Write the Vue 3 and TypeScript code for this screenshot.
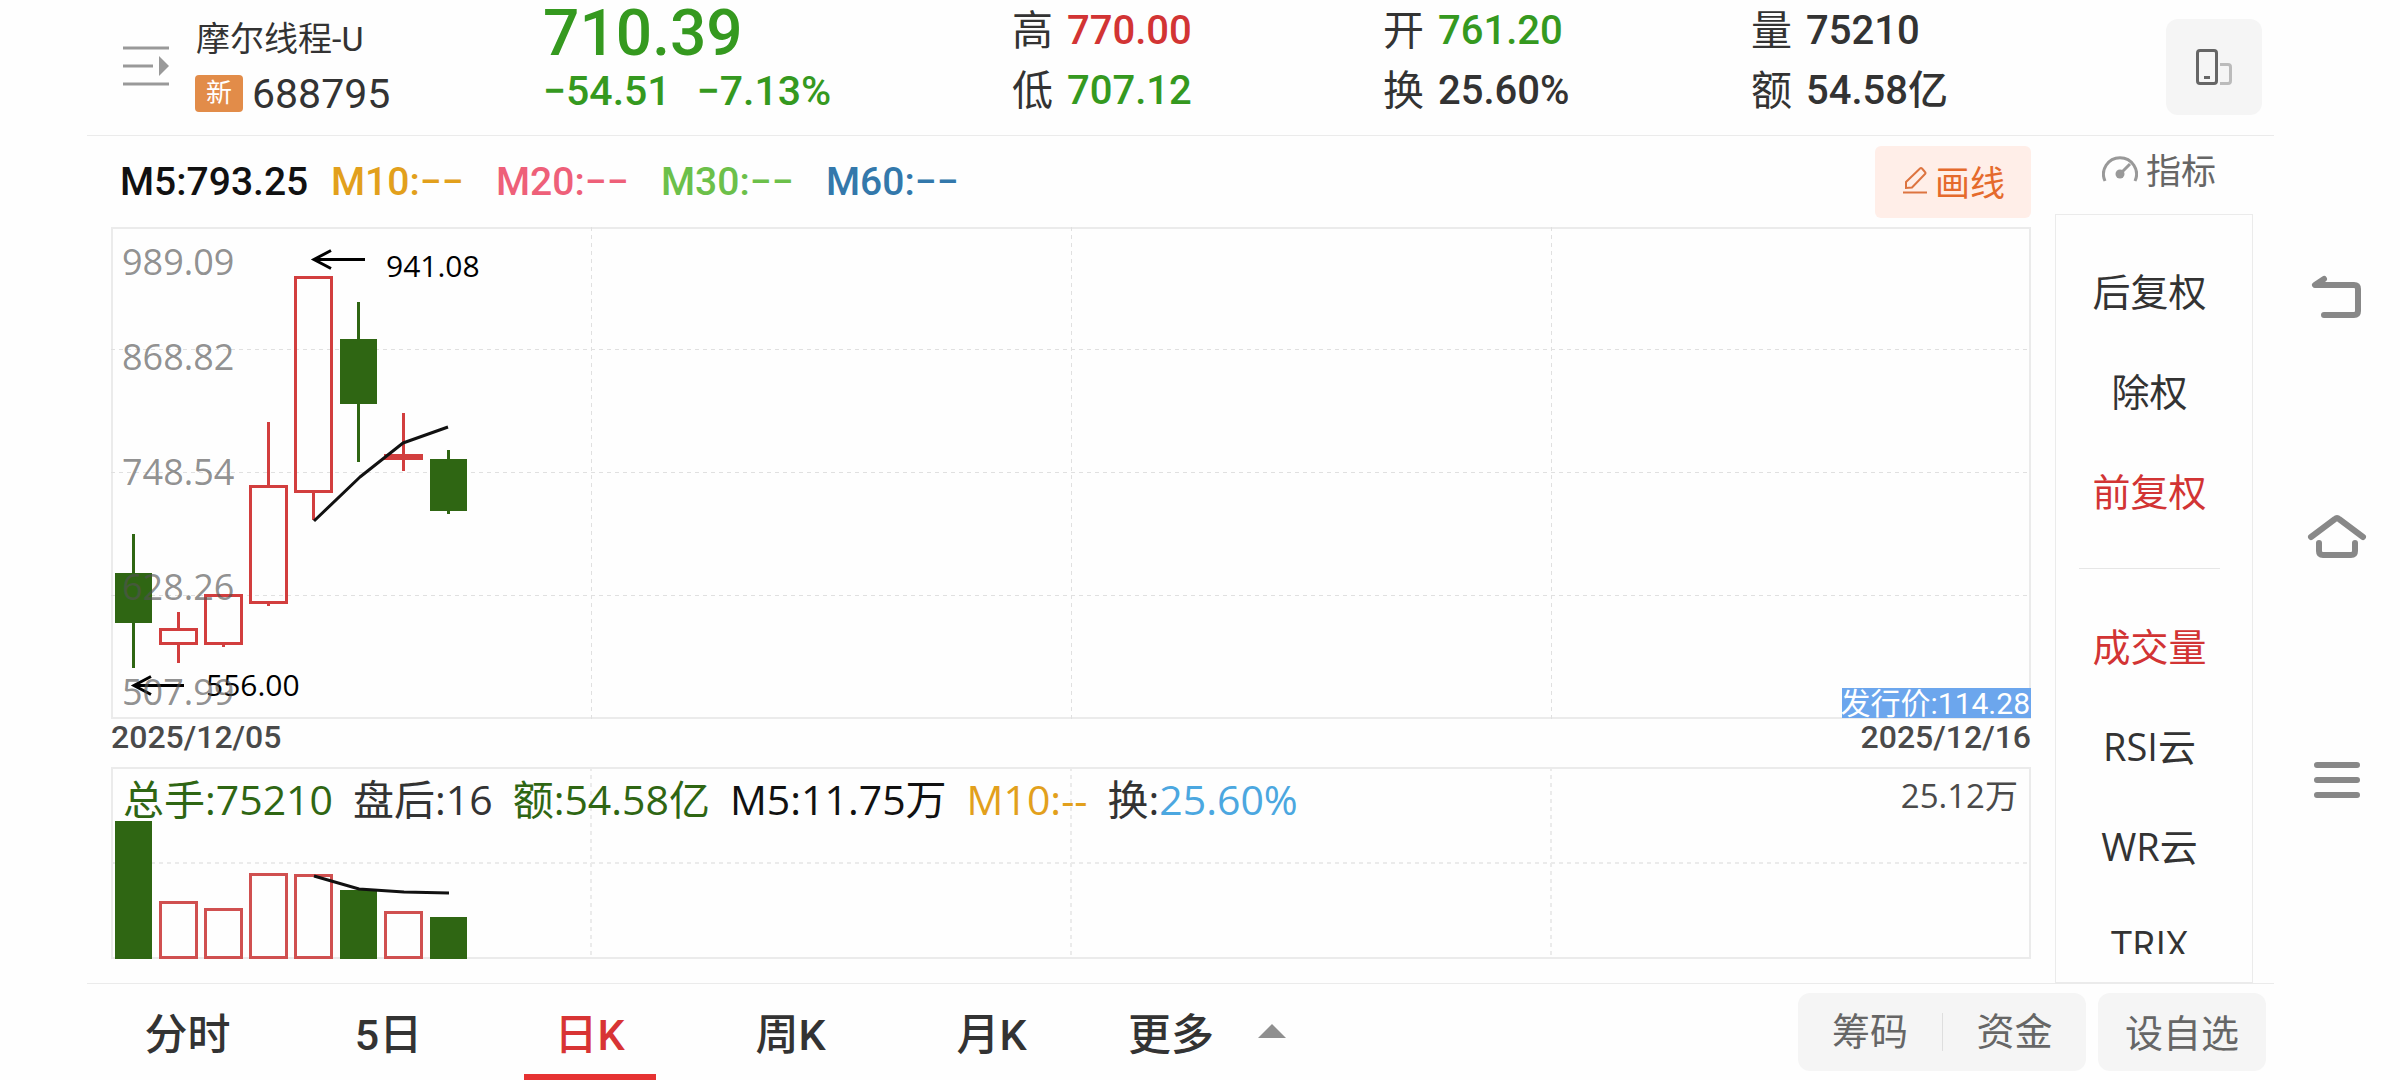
<script setup lang="ts">
import { ref } from 'vue'

interface Candle {
  up: boolean
  high: number
  top: number
  bottom: number
  low: number
  volume: number
}

interface Quote {
  label: string
  value: string
  tone: string
}

const quotes: Quote[][] = [
  [
    { label: '高', value: '770.00', tone: 'rise' },
    { label: '低', value: '707.12', tone: 'fall' },
  ],
  [
    { label: '开', value: '761.20', tone: 'fall' },
    { label: '换', value: '25.60%', tone: 'plain' },
  ],
  [
    { label: '量', value: '75210', tone: 'plain' },
    { label: '额', value: '54.58亿', tone: 'plain' },
  ],
]

const averages = [
  { text: 'M10:−−', color: '#e2a01c' },
  { text: 'M20:−−', color: '#ee6079' },
  { text: 'M30:−−', color: '#6cc04a' },
  { text: 'M60:−−', color: '#3378ab' },
]

/* Vertical values are in chart units, measured from the top of each plot. */
const candles: Candle[] = [
  { up: false, high: 307, top: 346, bottom: 396, low: 441, volume: 138 },
  { up: true, high: 385, top: 401, bottom: 418, low: 436, volume: 58 },
  { up: true, high: 367, top: 367, bottom: 418, low: 420, volume: 51 },
  { up: true, high: 195, top: 258, bottom: 377, low: 379, volume: 86 },
  { up: true, high: 49, top: 49, bottom: 266, low: 293, volume: 85 },
  { up: false, high: 75, top: 112, bottom: 177, low: 235, volume: 69 },
  { up: true, high: 186, top: 227, bottom: 233, low: 244, volume: 48 },
  { up: false, high: 223, top: 232, bottom: 284, low: 287, volume: 42 },
]

const STEP = 45
const left = (i: number): number => 4 + i * STEP
const VOLUME_BASE = 192

const priceLabels = [
  { text: '989.09', y: 48 },
  { text: '868.82', y: 143 },
  { text: '748.54', y: 258 },
  { text: '628.26', y: 373 },
  { text: '507.99', y: 478 },
]

const gridColumns = [480, 960, 1440]

const adjustments = ['后复权', '除权', '前复权']
const indicators = ['成交量', 'RSI云', 'WR云', 'TRIX']
const adjustment = ref('前复权')
const indicator = ref('成交量')

const periods = ['分时', '5日', '日K', '周K', '月K']
const period = ref('日K')
</script>

<template>
  <div class="screen">
    <div class="app">
      <header class="header">
        <div class="stock">
          <button class="bare" aria-label="列表">
            <svg width="46" height="40" viewBox="0 0 46 40">
              <path d="M0 2H46M0 20H30M0 38H46" stroke="#999" stroke-width="3" />
              <path d="M36 10L46 20L36 30Z" fill="#999" />
            </svg>
          </button>
          <div class="identity">
            <h1 class="name">摩尔线程-U</h1>
            <div class="code-row">
              <span class="badge">新</span>
              <span class="code">688795</span>
            </div>
          </div>
        </div>

        <div class="price fall">
          <div class="last">710.39</div>
          <div class="change"><span>−54.51</span><span>−7.13%</span></div>
        </div>

        <dl v-for="(column, i) in quotes" :key="i" class="quotes">
          <div v-for="q in column" :key="q.label" class="quote">
            <dt>{{ q.label }}</dt>
            <dd :class="q.tone">{{ q.value }}</dd>
          </div>
        </dl>

        <button class="rotate" aria-label="竖屏">
          <svg width="36" height="36" viewBox="0 0 36 36" fill="none" stroke-width="3">
            <rect x="1.500" y="1.500" width="19" height="33" rx="2.500" stroke="#666" />
            <path d="M8 28.500H14" stroke="#666" />
            <path d="M24 15.500H32Q34.500 15.500 34.500 18V32Q34.500 34.500 32 34.500H24" stroke="#bbb" />
          </svg>
        </button>
      </header>

      <main class="body">
        <section class="charts">
          <div class="averages">
            <span class="average first">M5:793.25</span>
            <span v-for="a in averages" :key="a.text" class="average" :style="{ color: a.color }">{{ a.text }}</span>
            <button class="draw">
              <svg width="24" height="28" viewBox="0 0 24 28" fill="none" stroke="#dd7440" stroke-width="2">
                <path d="M0 26.500H24" />
                <path d="M3 22V16L17 2.500Q18 1.500 19 2.500L22 6Q23 7 22 8L9 21.500Z" />
              </svg>
              <span>画线</span>
            </button>
          </div>

          <svg class="plot" viewBox="0 0 1920 492">
            <rect x="1" y="1" width="1918" height="490" fill="none" stroke="#ebebeb" stroke-width="2" />
            <g stroke="#e0e0e0" stroke-dasharray="4 4">
              <path v-for="y in [122, 245, 368]" :key="y" :d="`M0 ${y}.5H1920`" />
              <path v-for="x in gridColumns" :key="x" :d="`M${x}.5 0V492`" />
            </g>

            <g v-for="(c, i) in candles" :key="i">
              <template v-if="c.up">
                <path
                  :d="`M${left(i) + 18.5} ${c.high}V${c.top}M${left(i) + 18.5} ${c.bottom}V${c.low}`"
                  stroke="#d23e3e"
                  stroke-width="3"
                />
                <rect
                  :x="left(i) + 0.5"
                  :y="c.top + 1.5"
                  width="36"
                  :height="c.bottom - c.top - 3"
                  fill="none"
                  stroke="#d23e3e"
                  stroke-width="3"
                />
              </template>
              <template v-else>
                <rect :x="left(i) + 17" :y="c.high" width="3" :height="c.low - c.high" fill="#2f6613" />
                <rect :x="left(i)" :y="c.top" width="37" :height="c.bottom - c.top" fill="#2f6613" />
              </template>
            </g>

            <path d="M203 294L249 250L292 216L337 200" fill="none" stroke="#111" stroke-width="3" stroke-linejoin="round" />

            <g fill="none" stroke="#000" stroke-width="3">
              <path d="M254 32.500H203M220 23.500L203 32.500L220 41.500" />
              <path d="M73 458.500H23M40 449.500L23 458.500L40 467.500" />
            </g>
            <text class="mark" x="275" y="50">941.08</text>
            <text class="mark" x="95" y="469">556.00</text>
            <text v-for="p in priceLabels" :key="p.text" class="scale" x="11" :y="p.y">{{ p.text }}</text>

            <rect x="1731" y="461" width="189" height="30" fill="#6ca6ed" />
            <text class="issue" x="1919" y="487" text-anchor="end">发行价:114.28</text>
          </svg>

          <div class="dates"><time>2025/12/05</time><time>2025/12/16</time></div>

          <div class="volume">
            <svg class="plot" viewBox="0 0 1920 192">
              <rect x="1" y="1" width="1918" height="190" fill="none" stroke="#ebebeb" stroke-width="2" />
              <g stroke="#ebebeb" stroke-width="2" stroke-dasharray="4 4">
                <path d="M0 96H1920" />
                <path v-for="x in gridColumns" :key="x" :d="`M${x} 0V192`" />
              </g>
              <template v-for="(c, i) in candles" :key="i">
                <rect
                  v-if="c.up"
                  :x="left(i) + 0.5"
                  :y="VOLUME_BASE - c.volume + 1.5"
                  width="36"
                  :height="c.volume - 3"
                  fill="#fefefe"
                  stroke="#d05050"
                  stroke-width="3"
                />
                <rect v-else :x="left(i)" :y="VOLUME_BASE - c.volume" width="37" :height="c.volume" fill="#2f6613" />
              </template>
              <path d="M203 109L248 122L293 125L338 126" fill="none" stroke="#111" stroke-width="3" />
            </svg>
            <div class="legend">
              <span class="deep">总手:75210</span>
              <span>盘后:16</span>
              <span class="deep">额:54.58亿</span>
              <span class="ink">M5:11.75万</span>
              <span class="amber">M10:--</span>
              <span>换:<span class="sky">25.60%</span></span>
              <span class="peak">25.12万</span>
            </div>
          </div>
        </section>

        <aside class="side">
          <button class="bare side-head">
            <svg width="36" height="28" viewBox="0 0 36 28" fill="none" stroke="#999" stroke-width="3">
              <path d="M3 27A16.500 16.500 0 1 1 33 27" />
              <path d="M18 20L28 10" />
              <circle cx="18" cy="20" r="4.500" fill="#999" stroke="none" />
            </svg>
            <span>指标</span>
          </button>
          <div class="panel">
            <div class="options">
              <button
                v-for="a in adjustments"
                :key="a"
                class="bare option"
                :class="{ active: a === adjustment }"
                @click="adjustment = a"
              >{{ a }}</button>
              <hr class="split" />
              <button
                v-for="n in indicators"
                :key="n"
                class="bare option"
                :class="{ active: n === indicator }"
                @click="indicator = n"
              >{{ n }}</button>
            </div>
          </div>
        </aside>
      </main>

      <footer class="footer">
        <nav class="tabs">
          <button
            v-for="p in periods"
            :key="p"
            class="bare tab"
            :class="{ current: p === period }"
            @click="period = p"
          >{{ p }}</button>
          <button class="bare tab more">
            <span>更多</span>
            <svg width="28" height="14" viewBox="0 0 28 14"><path d="M14 0L28 14H0Z" fill="#8f8f8f" /></svg>
          </button>
        </nav>
        <div class="actions">
          <div class="pair">
            <button class="bare">筹码</button>
            <button class="bare">资金</button>
          </div>
          <button class="bare watch">设自选</button>
        </div>
      </footer>
    </div>

    <nav class="system">
      <button class="bare" aria-label="返回">
        <svg width="60" height="60" viewBox="0 0 60 60" fill="none" stroke="#888" stroke-width="6" stroke-linecap="round" stroke-linejoin="round">
          <path d="M17 11L8 17H47Q51 17 51 21V43Q51 47 47 47H17" />
        </svg>
      </button>
      <button class="bare" aria-label="主页">
        <svg width="60" height="60" viewBox="0 0 60 60" fill="none" stroke="#888" stroke-width="6" stroke-linecap="round" stroke-linejoin="round">
          <path d="M4 27L28 9Q30 7 32 9L56 27" />
          <path d="M12 33V41Q12 45 16 45H44Q48 45 48 41V33" />
        </svg>
      </button>
      <button class="bare" aria-label="最近任务">
        <svg width="60" height="60" viewBox="0 0 60 60" fill="none" stroke="#888" stroke-width="6" stroke-linecap="round">
          <path d="M10 13H50M10 28H50M10 43H50" />
        </svg>
      </button>
    </nav>
  </div>
</template>

<style>
body {
  margin: 0;
  background: #fefefe;
}
</style>

<style scoped>
.screen {
  display: grid;
  grid-template-columns: minmax(0, 1fr) 126px;
  min-height: 100vh;
  padding-left: 87px;
  box-sizing: border-box;
  color: #333;
  font-family: Roboto, 'Noto Sans CJK SC', sans-serif;
}

button {
  font: inherit;
  color: inherit;
  cursor: pointer;
}

svg {
  display: block;
}

.bare {
  padding: 0;
  border: 0;
  background: none;
}

.app {
  display: flex;
  flex-direction: column;
  min-width: 0;
}

.header {
  display: grid;
  grid-template-columns: 456fr 469fr 371fr 368fr 415fr 108px;
  height: 135px;
  border-bottom: 1px solid #ebebeb;
}

.stock {
  display: flex;
  align-items: center;
  gap: 26px;
  padding: 0 0 3px 36px;
}

.identity {
  display: flex;
  flex-direction: column;
  gap: 15px;
}

.name {
  margin: 0;
  padding-left: 1px;
  font-size: 34px;
  font-weight: 400;
  line-height: 40px;
}

.code-row {
  display: flex;
  align-items: center;
  gap: 9px;
}

.badge {
  width: 48px;
  border-radius: 4px;
  background: #e28c49;
  color: #fff;
  font-size: 26px;
  line-height: 37px;
  text-align: center;
}

.code {
  font-size: 41px;
  line-height: 40px;
}

.price {
  font-weight: 500;
}

.last {
  font-size: 64px;
  line-height: 68px;
}

.change {
  display: flex;
  gap: 26px;
  font-size: 41px;
  line-height: 46px;
}

.rise {
  color: #d23434;
}

.fall {
  color: #35991f;
}

.quotes {
  margin: 0;
  padding-top: 1px;
}

.quote {
  display: flex;
  gap: 14px;
  font-size: 41px;
  line-height: 60px;
}

.quote dd {
  margin: 0;
  font-size: 40px;
  font-weight: 500;
}

.rotate {
  display: grid;
  place-items: center;
  width: 96px;
  height: 96px;
  margin-top: 19px;
  border: 0;
  border-radius: 12px;
  background: #f5f5f5;
}

.body {
  display: flex;
  flex: 1;
}

.charts {
  flex: 1;
  min-width: 0;
  padding: 0 24px 24px;
}

.averages {
  display: flex;
  align-items: center;
  height: 91px;
  padding-left: 9px;
  font-size: 39px;
  font-weight: 500;
}

.average {
  width: 165px;
}

.average.first {
  width: 211px;
  color: #111;
}

.draw {
  display: flex;
  align-items: center;
  justify-content: center;
  gap: 8px;
  width: 156px;
  height: 72px;
  margin-left: auto;
  padding: 0 0 3px 2px;
  border: 0;
  border-radius: 6px;
  background: #ffeee8;
  color: #e56a2c;
  font-size: 35px;
  font-weight: 400;
}

.plot {
  width: 100%;
  height: auto;
}

.scale {
  font-family: 'Open Sans', sans-serif;
  font-size: 36px;
  fill: rgba(82, 82, 82, 0.65);
}

.mark {
  font-family: 'Open Sans', sans-serif;
  font-size: 30px;
  fill: #000;
}

.issue {
  font-size: 30px;
  fill: #fff;
}

.dates {
  display: flex;
  justify-content: space-between;
  height: 48px;
  color: #4a4a4a;
  font-size: 32px;
  font-weight: 500;
  line-height: 36px;
}

.volume {
  position: relative;
}

.legend {
  position: absolute;
  inset: 0 13px auto 12px;
  display: flex;
  gap: 20px;
  font-family: 'Open Sans', 'Noto Sans CJK SC', sans-serif;
  font-size: 41px;
  line-height: 64px;
  white-space: nowrap;
}

.peak {
  margin-left: auto;
  color: #4a4a4a;
  font-size: 33px;
  line-height: 58px;
}

.deep {
  color: #2f6613;
}

.ink {
  color: #111;
}

.amber {
  color: #e2a01c;
}

.sky {
  color: #4ba7e0;
}

.side {
  display: flex;
  flex-direction: column;
  width: 198px;
  margin-right: 21px;
}

.side-head {
  display: flex;
  align-items: center;
  justify-content: center;
  gap: 8px;
  height: 64px;
  margin: 0 0 14px 10px;
  color: #666;
  font-size: 35px;
}

.panel {
  display: flex;
  flex: 1 1 0;
  flex-direction: column;
  min-height: 0;
  padding: 24px 9px 28px 0;
  border: 1px solid #ebebeb;
}

.options {
  display: flex;
  flex: 1 1 0;
  flex-direction: column;
  min-height: 0;
  overflow: hidden;
}

.option {
  flex: none;
  height: 100px;
  font-family: 'Open Sans', 'Noto Sans CJK SC', sans-serif;
  font-size: 38px;
}

.active {
  color: #d23434;
}

.split {
  flex: none;
  width: 141px;
  margin: 29px auto 25px;
  border: 0;
  border-top: 1px solid #e6e6e6;
}

.footer {
  display: flex;
  justify-content: space-between;
  height: 96px;
  border-top: 1px solid #ebebeb;
}

.tabs {
  display: flex;
}

.tab {
  width: 201px;
  height: 96px;
  padding-bottom: 2px;
  font-size: 43px;
  font-weight: 500;
}

.current {
  background: linear-gradient(#e63232, #e63232) center bottom / 132px 6px no-repeat;
  color: #d83434;
}

.more {
  display: flex;
  align-items: center;
  justify-content: center;
  gap: 44px;
  width: 230px;
}

.actions {
  display: flex;
  gap: 12px;
  padding: 9px 8px 9px 0;
  color: #666;
  font-size: 38px;
}

.pair,
.watch {
  border-radius: 12px;
  background: #f5f5f5;
}

.pair {
  display: flex;
  align-items: center;
}

.pair button {
  width: 144px;
  line-height: 38px;
}

.pair button + button {
  border-left: 1px solid #dedede;
}

.watch {
  width: 168px;
  padding-bottom: 4px;
}

.system {
  display: flex;
  flex-direction: column;
  align-items: center;
  justify-content: center;
  gap: 182px;
}
</style>
